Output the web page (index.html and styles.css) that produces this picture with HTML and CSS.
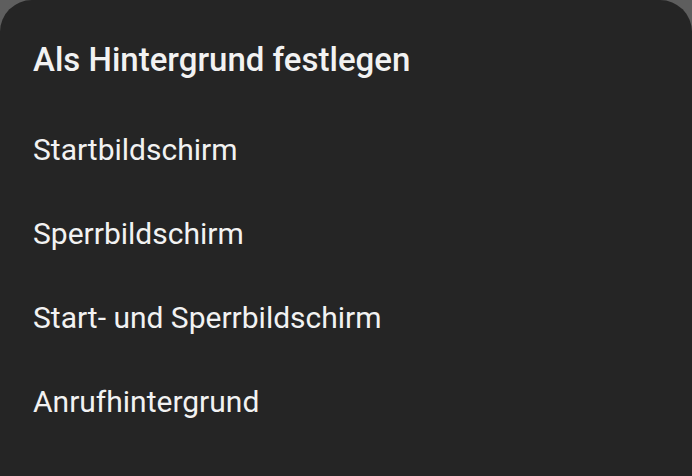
FILE: index.html
```html
<!DOCTYPE html>
<html lang="de">
<head>
    <meta charset="UTF-8">
    <meta name="viewport" content="width=device-width, initial-scale=1.0">
    <title>Als Hintergrund festlegen</title>
    <link rel="stylesheet" href="styles.css">
</head>
<body>
    <div class="dialog">
        <h1 class="dialog-title">Als Hintergrund festlegen</h1>
        <ul class="options">
            <li>Startbildschirm</li>
            <li>Sperrbildschirm</li>
            <li>Start- und Sperrbildschirm</li>
            <li>Anrufhintergrund</li>
        </ul>
    </div>
</body>
</html>
```

FILE: styles.css
```css
body {
    margin: 0;
    padding: 0;
    background-color: #5e5e5e;
    font-family: Roboto, "Liberation Sans", sans-serif;
    color: #f2f2f2;
    overflow: hidden;
}
.dialog {
    background-color: #252525;
    border-radius: 32px 32px 0 0;
    min-height: 476px;
    padding: 40px 33px 0;
    box-sizing: border-box;
}
.dialog-title {
    margin: 0;
    font-size: 33px;
    font-weight: 500;
    line-height: 40px;
}
.options {
    list-style: none;
    margin: 0;
    padding: 0;
    margin-top: 28px;
}
.options li {
    font-size: 30px;
    line-height: 84px;
    height: 84px;
}
```
